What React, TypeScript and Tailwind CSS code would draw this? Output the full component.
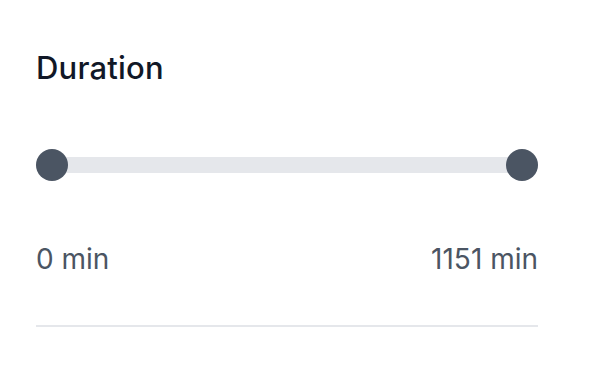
import React from "react";

export default function App() {
  return (
    <div className="w-[612px] h-[388px] bg-white" style={{ fontFamily: "Inter, 'Noto Sans', sans-serif" }}>
      <div className="ml-[36px] w-[502px] pt-[50px]">
        <h2 className="text-[31px] leading-[36px] font-medium tracking-[0.2px] text-[#111827]">Duration</h2>
        <div className="relative mt-[63px] h-[32px] flex items-center">
          <div className="h-[16px] w-full rounded-full bg-[#e5e7eb]" />
          <div className="absolute left-0 top-0 w-[32px] h-[32px] rounded-full bg-[#4b5563]" />
          <div className="absolute right-0 top-0 w-[32px] h-[32px] rounded-full bg-[#4b5563]" />
        </div>
        <div className="mt-[60px] flex justify-between text-[28px] leading-[36px] text-[#4b5563]">
          <span>0 min</span>
          <span>1151 min</span>
        </div>
        <div className="mt-[48px] h-[2px] bg-[#e5e7eb]" />
      </div>
    </div>
  );
}
